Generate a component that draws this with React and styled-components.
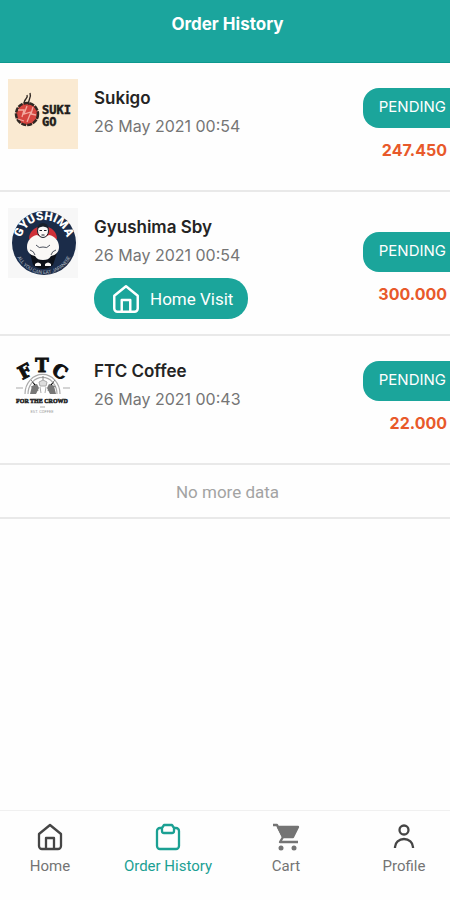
import React from 'react';

import styled, { createGlobalStyle } from 'styled-components';

const GlobalStyle = createGlobalStyle`
  * {
    box-sizing: border-box;
  }

  body {
    margin: 0;
    background: #fefefe;
    color: #242424;
    font-family: Inter, 'Open Sans', sans-serif;
  }
`;

const Page = styled.div`
  display: flex;
  flex-direction: column;
  min-height: 100vh;
  overflow-x: hidden;
`;

const Header = styled.header`
  height: 63px;
  padding: 12px 0 0 5px;
  border-bottom: 1px solid #0d988e;
  background: #1ba59d;
  color: #fff;
  text-align: center;
`;

const Title = styled.h1`
  margin: 0;
  font-size: 17px;
  font-weight: 700;
  line-height: 24px;
`;

const Main = styled.main`
  flex: 1;
`;

const Orders = styled.ul`
  margin: 0;
  padding: 0;
  list-style: none;
`;

const Order = styled.li`
  display: flex;
  gap: 16px;
  min-height: 129px;
  padding: 16px 0 15px 8px;
  border-bottom: 2px solid #e9e9e9;
`;

const Logo = styled.svg`
  flex: none;
  width: 70px;
  height: 70px;
`;

const Details = styled.div`
  flex: 1;
  padding-top: 5px;
`;

const Name = styled.h2`
  margin: 0;
  font-size: 17px;
  font-weight: 600;
  line-height: 28px;
`;

const OrderDate = styled.time`
  display: block;
  color: #757575;
  font-size: 16px;
  line-height: 28px;
`;

const VisitButton = styled.button`
  display: flex;
  align-items: center;
  gap: 8px;
  height: 41px;
  margin-top: 9px;
  padding: 0 15px 0 16px;
  border: 0;
  border-radius: 20px;
  background: #1ba59b;
  color: #fff;
  font-family: Roboto, sans-serif;
  font-size: 17px;
`;

const Summary = styled.div`
  display: flex;
  flex-direction: column;
  align-self: flex-end;
  align-items: flex-end;
  gap: 10px;
  padding-bottom: 13px;
`;

const Status = styled.span`
  height: 40px;
  padding: 0 4px 0 16px;
  border-radius: 16px 0 0 16px;
  background: #1ba59b;
  color: #fff;
  font-size: 15px;
  line-height: 38px;
`;

const Amount = styled.strong`
  padding-right: 3px;
  color: #e8592a;
  font-size: 16px;
  font-weight: 700;
  line-height: 24px;
`;

const EndNote = styled.p`
  margin: 0;
  padding: 14px 0 12px 5px;
  border-bottom: 2px solid #e9e9e9;
  color: #a3a3a3;
  font-family: Roboto, sans-serif;
  font-size: 17px;
  line-height: 26px;
  text-align: center;
`;

const Nav = styled.nav`
  display: grid;
  grid-template-columns: repeat(4, 1fr);
  height: 90px;
  margin: 0 -13px 0 -9px;
  border-top: 1px solid #f0f0f0;
`;

const NavLink = styled.a`
  display: flex;
  flex-direction: column;
  align-items: center;
  gap: 4px;
  padding-top: 11px;
  color: ${({ $active }) => ($active ? '#1ba093' : '#747474')};
  font-family: Roboto, sans-serif;
  font-size: 15px;
  line-height: 20px;
  text-decoration: none;
`;

const Icon = styled.svg`
  width: ${({ $size }) => $size || 30}px;
  height: ${({ $size }) => $size || 30}px;
  fill: none;
  stroke: ${({ $color }) => $color || 'currentColor'};
  stroke-width: 2.3;
  stroke-linejoin: round;
`;

const HomeIcon = (props) => (
  <Icon viewBox="0 0 30 30" aria-hidden="true" {...props}>
    <path d="M4 12 15 3l11 9v12a3 3 0 0 1-3 3H7a3 3 0 0 1-3-3zM11 27V16h8v11" />
  </Icon>
);

const OrdersIcon = () => (
  <Icon viewBox="0 0 30 30" aria-hidden="true">
    <path d="M9 6H7a3 3 0 0 0-3 3v15a3 3 0 0 0 3 3h16a3 3 0 0 0 3-3V9a3 3 0 0 0-3-3h-2" />
    <path d="m11 3-2 3v3q0 2 2 2h8q2 0 2-2V6l-2-3z" />
  </Icon>
);

const CartIcon = () => (
  <Icon viewBox="0 0 30 30" aria-hidden="true">
    <path d="M2 3h4l6 12-3 5h18" />
    <path d="M7 5h20l-5 10H12z" fill="currentColor" />
    <circle cx="10" cy="26" r="2.5" fill="currentColor" stroke="none" />
    <circle cx="23" cy="26" r="2.5" fill="currentColor" stroke="none" />
  </Icon>
);

const ProfileIcon = () => (
  <Icon viewBox="0 0 30 30" $color="#454545" aria-hidden="true">
    <circle cx="15" cy="8" r="4.5" />
    <path d="M6 26v-1a9 8 0 0 1 18 0v1" />
  </Icon>
);

const SukigoLogo = () => (
  <Logo viewBox="0 0 70 70" role="img" aria-label="Sukigo">
    <path fill="#faead2" d="M0 0h70v70H0z" />
    <circle cx="19" cy="35" r="11" fill="#d6453f" stroke="#302823" strokeWidth="2.5" strokeDasharray="5 1" />
    <path
      d="M10 31h6l-2 7m5-11-3 8 7-2-4 10m6-15-2 7 5 1M10 40l6 2"
      fill="none"
      stroke="#f3aaa0"
      strokeWidth="1.3"
    />
    <path d="M17 25c-3-5 4-5 2-9m2 10c-2-6 3-6 1-12" fill="none" stroke="#302823" strokeWidth="1.4" />
    <g
      fill="#211c1a"
      stroke="#211c1a"
      strokeWidth="0.5"
      fontFamily="DejaVu Sans Mono, monospace"
      fontSize="12"
      fontWeight="700"
    >
      <text x="34" y="35">SUKI</text>
      <text x="34" y="47">GO</text>
    </g>
  </Logo>
);

const GyushimaLogo = () => (
  <Logo viewBox="0 0 70 70" role="img" aria-label="Gyushima">
    <path fill="#f7f7f7" d="M0 0h70v70H0z" />
    <circle cx="36" cy="35" r="32" fill="#1b2c49" />
    <path d="M21 31a14 13 0 0 1 28 0z" fill="#cf3038" />
    <path d="M22 45 25 57q10 8 20 0l4-12z" fill="#0d1119" />
    <path
      d="M29 27q6 4 12 0c6 1 10 6 10 12 0 5-3 8-8 9-2 3-4 4-8 4s-6-1-8-4c-5-1-8-4-8-9 0-6 4-11 10-12z"
      fill="#faf8f6"
    />
    <path d="M28 37q3 4 7 2 4 2 7-2M27 47q-1-4-5-5m21 5q1-4 5-5" fill="none" stroke="#4c515c" />
    <ellipse cx="35" cy="23" rx="5.5" ry="6.5" fill="#faf8f6" stroke="#19202a" />
    <path d="M29 21q1-6 6-6t6 6q-6-5-12 0z" fill="#19202a" />
    <path d="M31.500 22.500h2.500m2 0h2.500M33.500 27h3" stroke="#19202a" />
    <path d="M27 56q3-3 6 0v2h-6zm10 0q3-3 6 0v2h-6z" fill="#faf8f6" />
    <defs>
      <path id="gyushima-top" d="M13 34a23 22 0 0 1 46 0" />
      <path id="gyushima-bottom" d="M7 38a29 28 0 0 0 58 0" />
    </defs>
    <g fill="#fff" fontFamily="Roboto, sans-serif" textAnchor="middle">
      <text fontSize="12" fontWeight="900">
        <textPath href="#gyushima-top" startOffset="50%">GYUSHIMA</textPath>
      </text>
      <text fontSize="5" opacity="0.6">
        <textPath href="#gyushima-bottom" startOffset="50%">ALL YOU CAN EAT JAPANESE</textPath>
      </text>
    </g>
  </Logo>
);

const FtcLogo = () => (
  <Logo viewBox="0 0 70 70" role="img" aria-label="FTC Coffee">
    <path d="M17 42a17 19 0 0 1 35 0M20 42a14 16 0 0 1 29 0" fill="none" stroke="#aaa" strokeWidth="1.2" />
    <path d="m23 28 5 5 2 6m17-11-5 5-2 6M35 24v7m-12 4 6-2m19 2-6-2" stroke="#888" />
    <path d="m22 42 2-8 5-2 2 4-3 6zm26 0-2-8-5-2-2 4 3 6z" fill="#777" />
    <path d="m31 30 4-2 4 2-1 4h-6zm1 5 1 6m5-6-1 6" fill="#ddd" stroke="#aaa" />
    <g
      fill="#111"
      stroke="#111"
      strokeWidth="1"
      fontFamily="DejaVu Serif, serif"
      fontSize="18"
      fontWeight="700"
      textAnchor="middle"
    >
      <text x="20" y="25" transform="rotate(-28 20 25)">F</text>
      <text x="34" y="20">T</text>
      <text x="49" y="25" transform="rotate(28 49 25)">C</text>
    </g>
    <path d="M8 36h7m40 0h7M32 55h5" stroke="#aaa" />
    <text
      x="34"
      y="51"
      fill="#222"
      fontFamily="Liberation Serif, serif"
      fontSize="6"
      fontWeight="700"
      textAnchor="middle"
      stroke="#222"
      strokeWidth="0.5"
    >
      FOR THE CROWD
    </text>
    <text x="34" y="61" fill="#999" fontFamily="Roboto, sans-serif" fontSize="4" textAnchor="middle">
      EST. COFFEE
    </text>
  </Logo>
);

const orders = [
  { name: 'Sukigo', date: '26 May 2021 00:54', amount: '247.450', OrderLogo: SukigoLogo },
  { name: 'Gyushima Sby', date: '26 May 2021 00:54', amount: '300.000', OrderLogo: GyushimaLogo, homeVisit: true },
  { name: 'FTC Coffee', date: '26 May 2021 00:43', amount: '22.000', OrderLogo: FtcLogo },
];

const App = () => (
  <>
    <GlobalStyle />
    <Page>
      <Header>
        <Title>Order History</Title>
      </Header>
      <Main>
        <Orders>
          {orders.map(({ name, date, amount, OrderLogo, homeVisit }) => (
            <Order key={name}>
              <OrderLogo />
              <Details>
                <Name>{name}</Name>
                <OrderDate>{date}</OrderDate>
                {homeVisit && (
                  <VisitButton type="button">
                    <HomeIcon $size={32} />
                    Home Visit
                  </VisitButton>
                )}
              </Details>
              <Summary>
                <Status>PENDING</Status>
                <Amount>{amount}</Amount>
              </Summary>
            </Order>
          ))}
        </Orders>
        <EndNote>No more data</EndNote>
      </Main>
      <Nav aria-label="Main">
        <NavLink href="#home">
          <HomeIcon $color="#454545" />
          Home
        </NavLink>
        <NavLink href="#orders" $active aria-current="page">
          <OrdersIcon />
          Order History
        </NavLink>
        <NavLink href="#cart">
          <CartIcon />
          Cart
        </NavLink>
        <NavLink href="#profile">
          <ProfileIcon />
          Profile
        </NavLink>
      </Nav>
    </Page>
  </>
);

export default App;
